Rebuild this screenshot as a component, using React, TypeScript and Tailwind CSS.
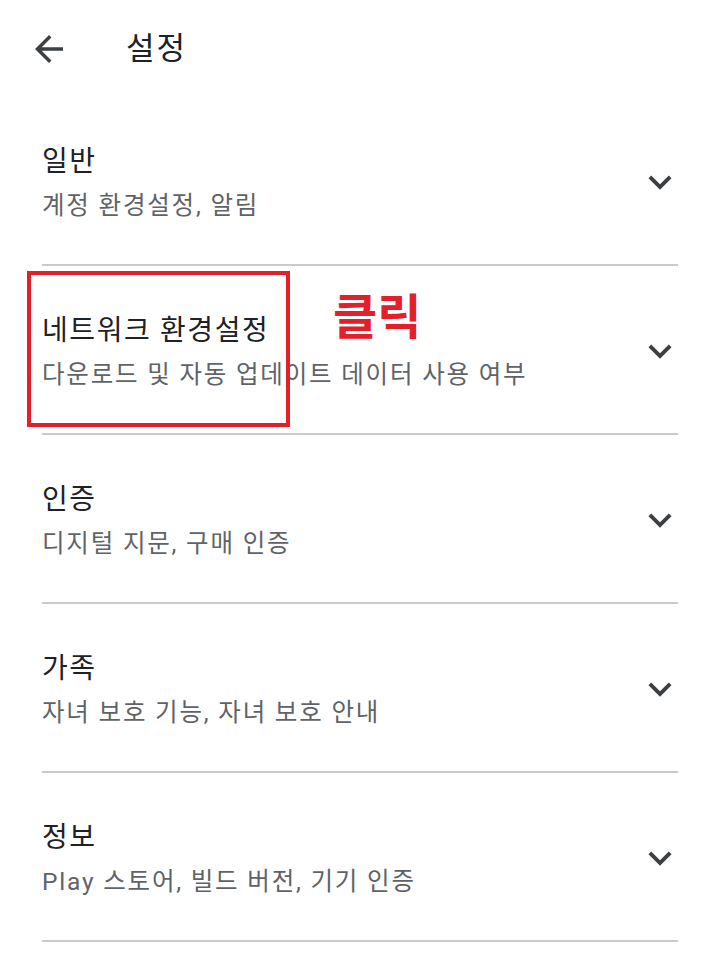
import React from "react";

type Item = { title: string; summary: string; highlight?: boolean };

const items: Item[] = [
  { title: "일반", summary: "계정 환경설정, 알림" },
  { title: "네트워크 환경설정", summary: "다운로드 및 자동 업데이트 데이터 사용 여부", highlight: true },
  { title: "인증", summary: "디지털 지문, 구매 인증" },
  { title: "가족", summary: "자녀 보호 기능, 자녀 보호 안내" },
  { title: "정보", summary: "Play 스토어, 빌드 버전, 기기 인증" },
];

const font = { fontFamily: 'Roboto, "Noto Sans CJK KR", sans-serif' };

const BackArrow = () => (
  <svg viewBox="0 0 24 24" className="w-[42px] h-[42px]" fill="#3c4043">
    <path d="M20 11H7.83l5.59-5.59L12 4l-8 8 8 8 1.41-1.41L7.83 13H20v-2z" />
  </svg>
);

const ExpandMore = () => (
  <svg viewBox="0 0 24 24" className="w-[46px] h-[46px]" fill="#3c4043">
    <path d="M16.59 8.59L12 13.17 7.41 8.59 6 10l6 6 6-6z" />
  </svg>
);

const SettingRow = ({ item }: { item: Item }) => (
  <div className="relative border-b-2 border-[#cacaca]">
    <div className="flex items-center pt-[47px] pb-[42px]">
      <div className="flex-1 flex flex-col gap-[10px]">
        <div className="text-[28px] leading-[36px] tracking-[1.6px] text-[#202124]">{item.title}</div>
        <div className="text-[24.5px] leading-[32px] tracking-[1.8px] text-[#5f6368]">{item.summary}</div>
      </div>
      <div className="mr-[-5px] mt-[-3px]">
        <ExpandMore />
      </div>
    </div>
    {item.highlight && (
      <>
        {/* click hint overlay */}
        <div className="absolute left-[-15px] top-[5px] w-[263px] h-[156px] border-4 border-[#e3202a]" />
        <div className="absolute left-[291px] top-[24px] text-[48px] leading-[56px] font-bold text-[#e3202a]">
          클릭
        </div>
      </>
    )}
  </div>
);

export default function App() {
  return (
    <div className="w-[720px] h-[976px] bg-white overflow-hidden" style={font}>
      <header className="h-[97px] flex items-center pl-[28px]">
        <BackArrow />
        <h1 className="ml-[56px] text-[31px] leading-[40px] tracking-[2px] text-[#202124] font-normal">설정</h1>
      </header>
      <div className="px-[42px]">
        {items.map((item) => (
          <SettingRow key={item.title} item={item} />
        ))}
      </div>
    </div>
  );
}
